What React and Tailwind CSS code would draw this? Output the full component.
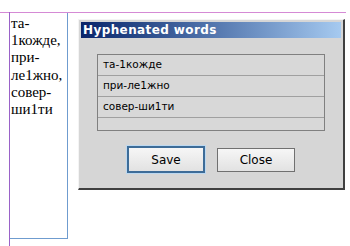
import React from 'react';

const words = ['та-1кожде', 'при-ле1жно', 'совер-ши1ти'];

export default function App() {
  return (
    <div className="relative w-[350px] h-[246px] bg-white overflow-hidden">
      {/* guides */}
      <div className="absolute left-0 top-[12px] w-[346px] h-px bg-[#d58ad5]" />
      <div className="absolute left-[9px] top-[12px] bottom-0 w-px bg-[#9a62c8]" />

      {/* text frame */}
      <div className="flex pl-[9px] pt-[12px]">
        <div className="w-[59px] h-[227px] border-r border-b border-[#6f9ccf] pl-[2px] pt-[3px] font-['Liberation_Serif','Times_New_Roman',serif] text-[15px] leading-[17.2px] text-black">
          та-<br />1кожде,<br />при-<br />ле1жно,<br />совер-<br />ши1ти
        </div>
      </div>

      {/* dialog */}
      <div className="absolute left-[78px] top-[19px] w-[267px] h-[171px] bg-[#d6d6d6] border-l border-t border-[#f4f4f4] border-r-2 border-b-2 border-r-[#404040] border-b-[#404040] p-[2px] flex flex-col font-['DejaVu_Sans',Verdana,sans-serif]">
        <div className="h-[16px] bg-gradient-to-r from-[#0a246a] to-[#a6caf0] flex items-center pl-[2px]">
          <span className="text-white font-bold text-[12px] tracking-[0.4px] leading-none">Hyphenated words</span>
        </div>
        <div className="mx-[16px] mt-[16px] h-[77px] border border-[#808080] bg-[#d8d8d8] flex flex-col">
          {words.map((w) => (
            <div
              key={w}
              className="h-[21px] border-b border-[#a0a0a0] flex items-center pl-[5px] text-[10.5px] text-black"
            >
              {w}
            </div>
          ))}
        </div>
        <div className="flex justify-center items-center gap-[12px] mt-[15px] text-[12px] text-black">
          <button className="w-[78px] h-[27px] border-2 border-[#3d6c98] bg-gradient-to-b from-[#f6f6f6] to-[#e2e2e2] shadow-[0_0_0_1px_#bcd8f0]">
            Save
          </button>
          <button className="w-[78px] h-[24px] border border-[#707070] bg-gradient-to-b from-[#f6f6f6] to-[#e2e2e2]">
            Close
          </button>
        </div>
      </div>
    </div>
  );
}
